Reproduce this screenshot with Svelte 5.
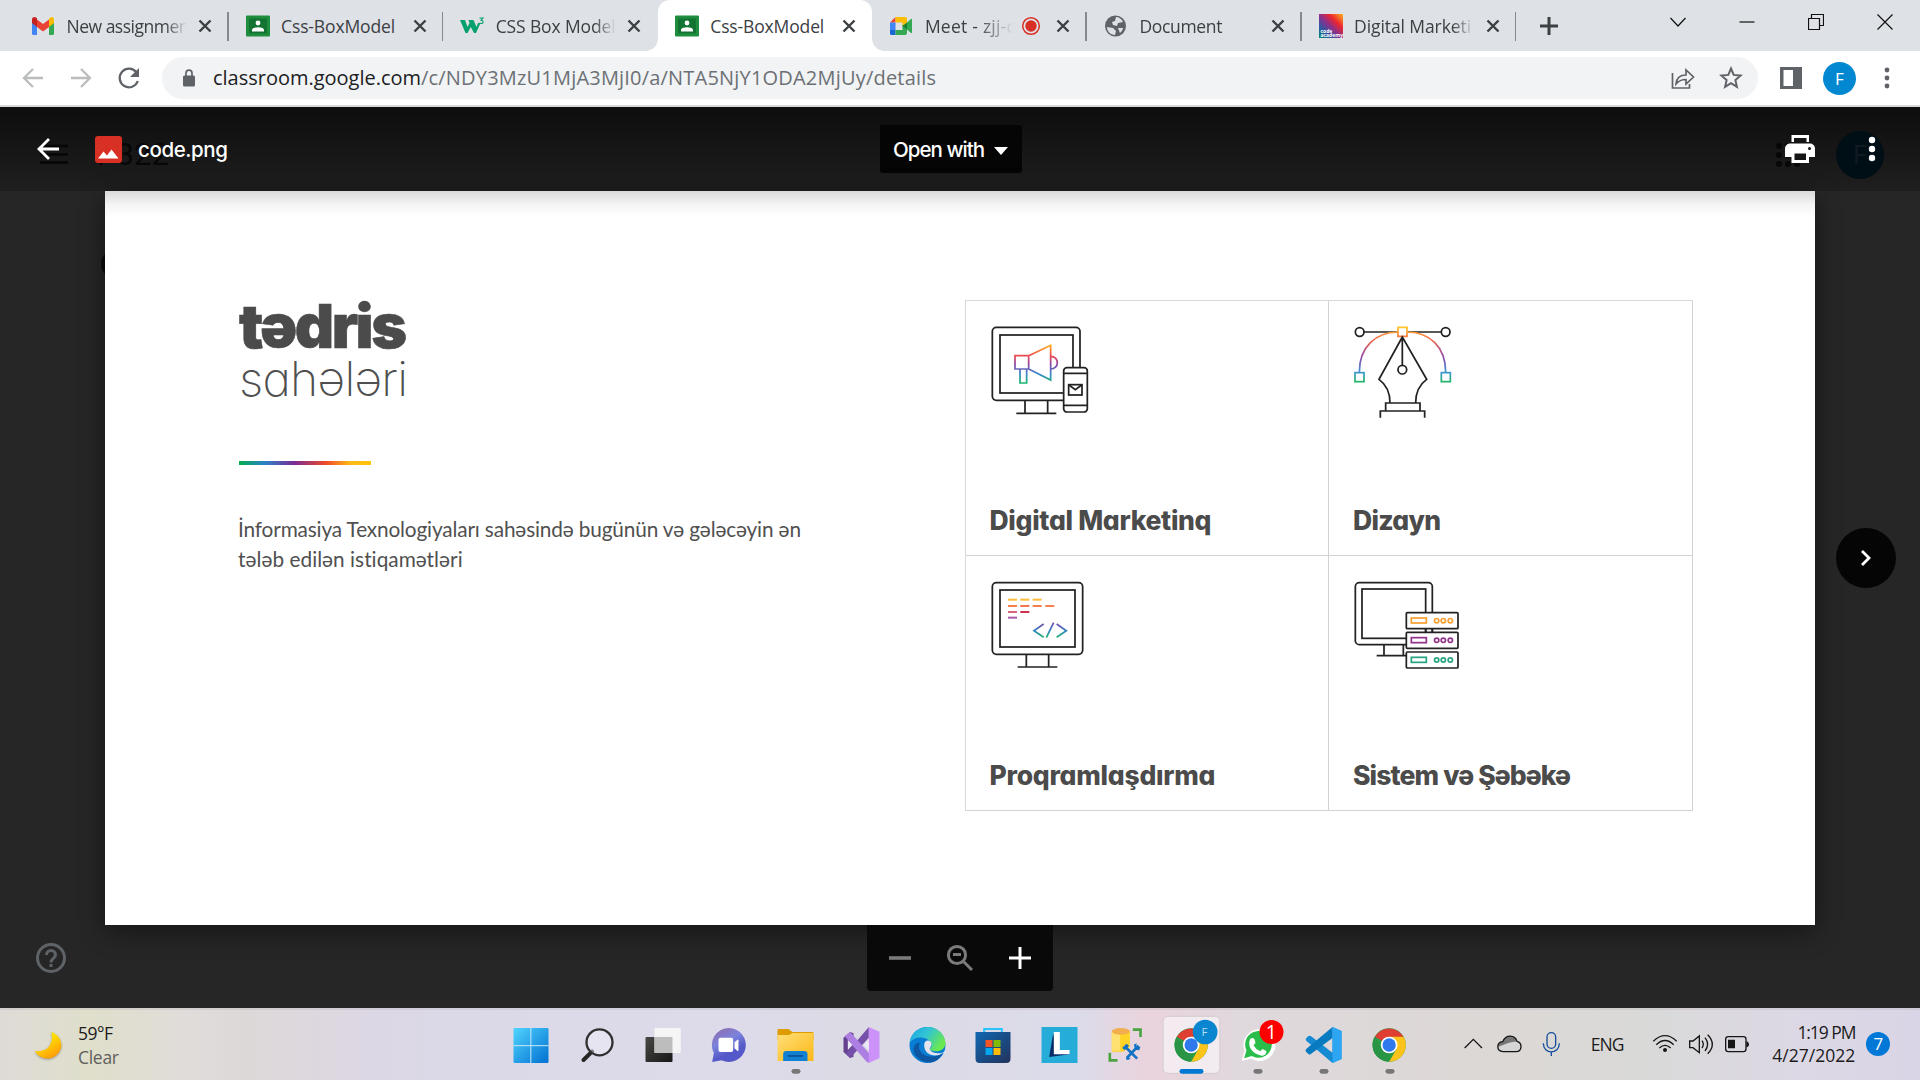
<script>
  // Spreads letter-spacing so that a label takes the given width.
  function fit(node, width) {
    const current = node.getBoundingClientRect().width;
    const count = Math.max(node.textContent.length - 1, 1);
    if (width) node.style.letterSpacing = `${(width - current) / count}px`;
  }

  const tabs = [
    { icon: 'gmail', title: 'New assignmen', width: 123 },
    { icon: 'classroom', title: 'Css-BoxModel', width: 114 },
    { icon: 'w3', title: 'CSS Box Model', width: 120, noline: true },
    { icon: 'classroom', title: 'Css-BoxModel', width: 114, active: true },
    { icon: 'meet', title: 'Meet - zjj-c', width: 90, recording: true },
    { icon: 'globe', title: 'Document', width: 83 },
    { icon: 'academy', title: 'Digital Marketi', width: 117 }
  ];

  const cards = [
    { art: 'marketing', label: 'Digital Marketinq', width: 222 },
    { art: 'design', label: 'Dizayn', width: 88 },
    { art: 'code', label: 'Proqramlaşdırma', width: 226 },
    { art: 'network', label: 'Sistem və Şəbəkə', width: 218 }
  ];

  const dashes = [
    [174, 164, '#fdbd3a'], [211, 164, '#fdbd3a'], [248, 164, '#fdbd3a'],
    [174, 183, '#f5804f'], [211, 183, '#f5764a'], [248, 183, '#f5804f'], [286, 183, '#f5804f'],
    [174, 201, '#d9647c'], [211, 201, '#cc3350'], [174, 218, '#a95aa9']
  ];
  const servers = [[203, '#f9a234'], [262, '#93358d'], [321, '#2aa584']];

  const apps = ['start', 'search', 'tasks', 'teams', 'files', 'vs', 'edge', 'store', 'l', 'sql', 'chromef', 'whatsapp', 'vscode', 'chrome'];
  const slotX = (i) => (i < 7 ? 55.5 + 198 * i : 61.5 + 198 * (i - 7));
</script>

{#snippet chrome(cx, cy)}
  <g transform="translate({cx} {cy})">
    <circle r="50" fill="#2a9c48" />
    <path d="M0 0 -43 -25A50 50 0 0 1 43 -25L22 -22Z" fill="#df3e32" />
    <path d="M0 -25H43.3A50 50 0 0 1 0 50L22 12Z" fill="#fcc31b" />
    <path d="M-43.3 -25-22 12 0 25-3 50A50 50 0 0 1 -43.3 -25Z" fill="#289444" />
    <circle r="25" fill="#fff" /><circle r="20" fill="#2f79ed" />
  </g>
{/snippet}

<div class="desktop">
  <header class="strip">
    {#each tabs as tab}
      <div class="tab" class:active={tab.active}>
        <svg class="fav" viewBox="0 0 24 24">
          {#if tab.icon === 'gmail'}
            <path d="M1 6v13.5q0 1.5 1.5 1.5H6V10z" fill="#4285f4" /><path d="M18 10v11h3.500q1.500 0 1.500-1.500V6z" fill="#34a853" />
            <path d="M6 5.500 12 10l6-4.500V13l-6 4.500L6 13z" fill="#ea4335" />
            <path d="M1 8V5.500c0-2.600 2.700-3 4-2l1 .8V13L1 9z" fill="#c5221f" /><path d="M18 4.500 19.500 3.500C21 2.500 23 3.500 23 5.500V9l-5 4z" fill="#fbbc04" />
          {:else if tab.icon === 'classroom'}
            <rect y="1.500" width="24" height="21" rx="1" fill="#1e8e3e" /><rect x="3" y="4.500" width="18" height="15" fill="#137333" />
            <circle cx="12" cy="9" r="2.400" fill="#fff" /><path d="M6 17.500v-2c1-3 11-3 12 0v2z" fill="#fff" />
          {:else if tab.icon === 'w3'}
            <path d="M0 6h5l2.500 7L9.500 9 8.500 6h5l3 7 1.500-4h2.500L16 19h-2l-3.200-6L7.500 19h-2z" fill="#04a06d" />
            <path d="M19.500 4h3.500l-2 2.300c3 0 2.700 3.700-.3 3.200l-1.200-.6" fill="none" stroke="#04a06d" stroke-width="1.100" />
          {:else if tab.icon === 'meet'}
            <path d="M1 8.500 6.500 3v5.500z" fill="#ea4335" /><path d="M6.500 3H16q2 0 2 2v6l-4.500 2.500v-5h-7z" fill="#fbbc04" />
            <path d="M1 8.500h5.500V16H1z" fill="#4285f4" /><path d="M1 16h5.500v5H2.500Q1 21 1 19.500z" fill="#1967d2" />
            <path d="M6.500 16h7v-5.500L18 14v5q0 2-2 2H6.500z" fill="#34a853" /><path d="m18 8.500 4-3.500q1-.5 1 .5v13q0 1-1 .5l-4-3.500z" fill="#34a853" /><path d="M13.500 12 18 8.500v7z" fill="#188038" />
          {:else if tab.icon === 'globe'}
            <circle cx="11.500" cy="12" r="10.500" fill="#5f6368" /><path d="M12 3c3 0 6 2 7 5l-5 1-1 3-4-1-1-3 3-1zM3 13l6 1 3 3-1 4c-5 0-8-4-8-8zM14 14h5c0 2-2 4-3 5z" fill="#dee1e6" />
          {:else}
            <defs><linearGradient id="ca" x1="0" y1="1" x2="1" y2="0"><stop offset="0" stop-color="#008a70" /><stop offset=".25" stop-color="#3156a3" /><stop offset=".48" stop-color="#8b308a" /><stop offset=".7" stop-color="#ed2530" /><stop offset="1" stop-color="#ffb51d" /></linearGradient></defs>
            <rect width="24" height="24" fill="url(#ca)" />
            <text x="1.500" y="18.500" class="mini">code</text><text x="1.500" y="22.500" class="mini">academy</text>
          {/if}
        </svg>
        <div class="title" class:short={tab.recording}><span use:fit={tab.width}>{tab.title}</span></div>
        {#if tab.recording}
          <svg class="rec" viewBox="0 0 20 20"><circle cx="10" cy="10" r="8.300" fill="none" stroke="#d93025" stroke-width="1.500" /><circle cx="10" cy="10" r="5.700" fill="#d93025" /></svg>
        {/if}
        <svg class="close" viewBox="0 0 16 16"><path d="M2.500 2.500l11 11m0-11-11 11" /></svg>
        {#if !tab.active && !tab.noline}<i class="rule"></i>{/if}
      </div>
    {/each}
    <svg class="plus" viewBox="0 0 20 20"><path d="M10 1v18M1 10h18" /></svg>
    <div class="controls">
      <svg viewBox="0 0 16 16"><path d="M.5 4 8 12l7.500-8" /></svg>
      <svg viewBox="0 0 16 16"><path d="M.5 8h15" /></svg>
      <svg viewBox="0 0 16 16"><path d="M.5 4.500h11v11H.5zM3.500 4.500v-4h12v11h-4" /></svg>
      <svg viewBox="0 0 16 16"><path d="m.5.5 15 15m0-15-15 15" /></svg>
    </div>
  </header>

  <div class="bar">
    <svg class="nav" viewBox="0 0 24 24"><path d="M22 12H3m9-9-9 9 9 9" /></svg>
    <svg class="nav" viewBox="0 0 24 24"><path d="M2 12h19m-9-9 9 9-9 9" /></svg>
    <svg class="nav reload" viewBox="0 0 24 24"><path d="M19.500 6.500A9.300 9.300 0 1 0 20.800 15" /><path class="solid" d="M22 2v9h-9z" /></svg>
    <div class="omni">
      <svg class="lock" viewBox="0 0 14 18"><rect x="1" y="6.500" width="12" height="11" rx="1.500" fill="#5f6368" /><path d="M4 7V4.200a3 3 0 0 1 6 0V7" fill="none" stroke="#5f6368" stroke-width="1.700" /></svg>
      <div class="url"><span use:fit={208}>classroom.google.com</span><span class="path" use:fit={515}>/c/NDY3MzU1MjA3MjI0/a/NTA5NjY1ODA2MjUy/details</span></div>
      <svg class="omniicon" viewBox="0 0 24 24"><path d="M1.500 7v15h17v-4M5 18c.5-6 4-9 10-9V4l7.500 7-7.500 7v-4.500c-5 0-7 1-10 4.500z" /></svg>
      <svg class="omniicon star" viewBox="0 0 24 24"><path d="m12 2.500 2.700 6.400 6.900.6-5.200 4.600 1.500 6.700-5.900-3.600-5.900 3.600 1.500-6.700-5.200-4.600 6.900-.6z" /></svg>
    </div>
    <svg class="panel" viewBox="0 0 22 22"><path d="M0 0h22v22H0zM3.500 3v16h9.500V3z" fill="#5f6368" fill-rule="evenodd" /></svg>
    <div class="avatar">F</div>
    <svg class="more" viewBox="0 0 6 22"><circle cx="3" cy="3" r="2.400" /><circle cx="3" cy="11" r="2.400" /><circle cx="3" cy="19" r="2.400" /></svg>
  </div>

  <main class="viewer">
    <div class="top">
      <svg class="ghostmenu" viewBox="0 0 28 20"><path d="M0 2h28M0 10.500h28M0 18.500h28" /></svg>
      <div class="ghostname">P322</div>
      <div class="ghostavatar">F</div>
      <svg class="ghostgrid" viewBox="0 0 26 26">
        {#each [4, 13, 22] as y}{#each [4, 13, 22] as x}<circle cx={x} cy={y} r="3" />{/each}{/each}
      </svg>
      <svg class="back" viewBox="0 0 24 24"><path d="M23 12H3m10-10L3 12l10 10" /></svg>
      <svg class="pic" viewBox="0 0 27 27"><rect width="27" height="27" rx="3" fill="#d93025" /><path d="M3 22.500 8.500 15.500 12 19.500 16.500 13.500 23.500 22.500Z" fill="#fff" /></svg>
      <div class="fname"><span use:fit={90}>code.png</span></div>
      <button class="open"><span use:fit={92}>Open with</span><svg viewBox="0 0 14 8"><path d="M0 0h14L7 8z" fill="#fff" /></svg></button>
      <svg class="print" viewBox="0 0 30 28"><path d="M6.500 0h17.500v7H6.500zM5 8.500h20a5 5 0 0 1 5 5V22h-6v6H6.500v-6H0v-8.500a5 5 0 0 1 5-5z" fill="#fff" /><path d="M9 3h12.500v4H9zM9.500 18.500h11.500V25H9.500z" fill="#151515" /><circle cx="24.500" cy="13.500" r="1.500" fill="#151515" /></svg>
      <svg class="dots" viewBox="0 0 8 26"><circle cx="4" cy="4" r="3.200" /><circle cx="4" cy="13" r="3.200" /><circle cx="4" cy="22" r="3.200" /></svg>
    </div>

    <div class="stage">
      <div class="peek"></div>
      <article class="sheet">
        <section class="intro">
          <h1><b><span use:fit={168}>tədris</span></b><em><span use:fit={169}>sahələri</span></em></h1>
          <div class="rainbow"></div>
          <p><span use:fit={563}>İnformasiya Texnologiyaları sahəsində bugünün və gələcəyin ən</span><br /><span use:fit={225}>tələb edilən istiqamətləri</span></p>
        </section>
        <section class="cards">
          {#each cards as card}
            <div class="card">
              {#if card.art === 'marketing'}
                <svg class="art" viewBox="120 102 320 282">
                  <defs><linearGradient id="mk" gradientUnits="userSpaceOnUse" x1="0" y1="165" x2="0" y2="280"><stop offset="0" stop-color="#ffb019" /><stop offset=".27" stop-color="#ef4b4b" /><stop offset=".5" stop-color="#9245a5" /><stop offset=".75" stop-color="#3987cc" /><stop offset="1" stop-color="#18b86b" /></linearGradient></defs>
                  <rect x="127" y="112" width="263" height="219" rx="12" /><rect x="150" y="135" width="219" height="174" />
                  <path d="M225 332v37m68-37v37M199 370h120" />
                  <g stroke="url(#mk)"><path d="M195 197h41v40h-41zM236 197 302 166V270L236 237M210 238v41h20v-41M303 199a19 19 0 0 1 0 38" /></g>
                  <rect x="341" y="233" width="71" height="133" rx="10" fill="#fff" /><path d="M341 250h71M341 346h71" /><rect x="356" y="284" width="40" height="31" /><path d="m357 285 19 14 19-14" />
                </svg>
              {:else if card.art === 'design'}
                <svg class="art" viewBox="101 102 320 282">
                  <defs><linearGradient id="ds" gradientUnits="userSpaceOnUse" x1="0" y1="112" x2="0" y2="275"><stop offset="0" stop-color="#ffc629" /><stop offset=".2" stop-color="#f66a42" /><stop offset=".55" stop-color="#914aae" /><stop offset=".83" stop-color="#3d98cf" /><stop offset="1" stop-color="#22b669" /></linearGradient></defs>
                  <path d="M134 126h101M265 126h101" /><circle cx="121" cy="126" r="13" /><circle cx="379" cy="126" r="13" />
                  <g stroke="url(#ds)"><path d="M120 246C120 170 170 127 235 126M379 246C379 170 330 127 265 126" /><rect x="236" y="112" width="27" height="27" /><rect x="107" y="248" width="27" height="27" /><rect x="366" y="248" width="27" height="27" /></g>
                  <path d="M249 141 179 268C204 286 212 311 212 339H289C289 311 297 286 322 268ZM249 142V225M199 339h103v24H199zM183 383v-20h133v20" /><circle cx="249" cy="239" r="13" />
                </svg>
              {:else if card.art === 'code'}
                <svg class="art" viewBox="120 102 320 282">
                  <defs><linearGradient id="cd" gradientUnits="userSpaceOnUse" x1="0" y1="233" x2="0" y2="278"><stop offset="0" stop-color="#8045a8" /><stop offset=".5" stop-color="#3280c5" /><stop offset="1" stop-color="#20b470" /></linearGradient></defs>
                  <rect x="127" y="113" width="271" height="215" rx="12" /><rect x="150" y="135" width="225" height="171" />
                  <path d="M229 329v36m67-36v36M203 366h119" />
                  {#each dashes as [x, y, c]}<rect {x} y={y - 3} width="27" height="6" fill={c} class="flat" />{/each}
                  <path stroke="url(#cd)" d="m281 237-29 20 29 20M311 233l-22 45M320 237l29 20-29 20" />
                </svg>
              {:else}
                <svg class="art" viewBox="101 102 320 282">
                  <rect x="108" y="113" width="231" height="186" rx="12" /><rect x="128" y="132" width="191" height="148" />
                  <path d="M194 300v32m58-32v32M172 332h90" />
                  {#each servers as [y, c]}
                    <rect x="261" {y} width="155" height="48" rx="3" fill="#fff" />
                    <g stroke={c}><rect x="276" y={y + 16} width="45" height="15" /><circle cx="352" cy={y + 24} r="6.500" /><circle cx="372" cy={y + 24} r="6.500" /><circle cx="393" cy={y + 24} r="6.500" /></g>
                  {/each}
                  <path d="M319 251v11m20-11v11" />
                </svg>
              {/if}
              <h2><span use:fit={card.width}>{card.label}</span></h2>
            </div>
          {/each}
        </section>
      </article>
      <div class="next"><svg viewBox="0 0 14 20"><path d="m3 3 7 7-7 7" /></svg></div>
    </div>

    <div class="foot">
      <svg class="help" viewBox="0 0 30 30"><circle cx="15" cy="15" r="13.500" /><path d="M10.500 12c0-6 9-6 9 0 0 3.500-4.500 3.500-4.500 7.500M15 21v3" /></svg>
      <div class="zoom">
        <svg viewBox="0 0 28 28" class="dim"><path d="M3 14h22" stroke-width="3.600" /></svg>
        <svg viewBox="0 0 28 28" class="dim"><circle cx="11" cy="11" r="8.600" /><path d="m17 17 9 9M7 10.500h8" /></svg>
        <svg viewBox="0 0 28 28"><path d="M3 14h22M14 3v22" /></svg>
      </div>
    </div>
  </main>

  <footer class="taskbar">
    <div class="weather">
      <svg viewBox="0 0 30 30"><defs><linearGradient id="mn" x1="0" y1="0" x2=".6" y2="1"><stop offset=".4" stop-color="#ffe100" /><stop offset="1" stop-color="#ff9d0a" /></linearGradient></defs><path d="M18 1C29 5 32 18 23 25 16 31 5 29 1 20.500 13 23 21 14 18 1z" fill="url(#mn)" /></svg>
      <div><span use:fit={35}>59°F</span><br /><span class="soft" use:fit={41}>Clear</span></div>
    </div>

    <nav class="apps">
      <svg width="0" height="0" class="defs">
        <defs>
          <linearGradient id="wn" x1="0" y1="0" x2="1" y2="1"><stop stop-color="#50d4ff" /><stop offset="1" stop-color="#0070d0" /></linearGradient>
          <linearGradient id="tm" x1="0" y1="0" x2=".5" y2="1"><stop stop-color="#9468a4" /><stop offset=".45" stop-color="#7b83dc" /><stop offset=".8" stop-color="#5558c8" /></linearGradient>
          <linearGradient id="fo" x1="0" y1="0" x2="1" y2="1"><stop stop-color="#ffdf78" /><stop offset="1" stop-color="#fcb716" /></linearGradient>
          <linearGradient id="eg" x1="0" y1="0" x2="1" y2=".5"><stop stop-color="#1ba5e8" /><stop offset=".5" stop-color="#32c5d2" /><stop offset="1" stop-color="#6be94f" /></linearGradient>
          <linearGradient id="st" x1="0" y1="0" x2="1" y2="1"><stop stop-color="#0f68b2" /><stop offset="1" stop-color="#23325c" /></linearGradient>
          <linearGradient id="tv" x1="0" y1="0" x2="1" y2="1"><stop stop-color="#484846" /><stop offset="1" stop-color="#171717" /></linearGradient>
        </defs>
      </svg>
      {#each apps as app, i}
        <svg class="slot" viewBox="{slotX(i)} 324 198 216">
          {#if app === 'start'}
            <rect x="102" y="384" width="105" height="105" rx="4" fill="url(#wn)" /><path d="M154 384v105M102 437h105" stroke="#c8e9fb" stroke-width="3" />
          {:else if app === 'search'}
            <path d="m312 480 26-26" stroke="#252525" stroke-width="12" stroke-linecap="round" /><circle cx="360" cy="427" r="39" fill="#f0eef8" fill-opacity=".5" stroke="#303030" stroke-width="7" />
          {:else if app === 'tasks'}
            <rect x="498" y="411" width="81" height="75" rx="3" fill="url(#tv)" /><rect x="525" y="384" width="79" height="75" rx="3" fill="#f5f5f5" /><path d="M525 411h54v48h-54z" fill="#bdbdbd" />
          {:else if app === 'teams'}
            <path d="M748 384a51 51 0 1 1-22 97l-28 5 5-27A51 51 0 0 1 748 384z" fill="url(#tm)" /><rect x="717" y="413" width="44" height="43" rx="6" fill="#fff" /><path d="m765 427 9-8q3-1 3 2v30q0 3-3 2l-9-8z" fill="#fff" />
          {:else if app === 'files'}
            <path d="M894 390q0-3 3-3h30l12 9h60q3 0 3 3v20H894z" fill="#df9c00" /><path d="M894 405h34l12-6h62v84H894z" fill="url(#fo)" /><path d="M911 483v-20q0-10 10-10h53q10 0 10 10v20z" fill="#1180d2" /><path d="M927 468h41" stroke="#084b8b" stroke-width="5" stroke-linecap="round" />
            <rect x="936" y="507" width="27" height="14" rx="7" fill="#777" />
          {:else if app === 'vs'}
            <path d="m1092 413 20-17 10 4v70l-10 4-20-18z" fill="#64408f" /><path d="m1168 381-69 80 13 13 56-61z" fill="#7550a9" /><path d="m1095 408 17-12 57 64v29l-8-4z" fill="#ae7fe2" /><path d="m1168 381 32 14v79l-32 15z" fill="#cc92fa" /><path d="m1105 420 14 15-14 15zM1168 419v32l-15-16z" fill="#ece8f6" />
          {:else if app === 'edge'}
            <circle cx="1344" cy="435" r="54" fill="#087dd3" /><path d="M1290 430C1296 366 1390 364 1398 428c1 20-22 32-45 23-8-4 10-10 2-22-10-20-50-25-65 1z" fill="url(#eg)" /><path d="M1321 428c-14 33 32 56 69 31-19 35-50 33-72 17-24-18-18-48 3-48z" fill="#0d56a1" /><path d="M1334 435c0-18 22-17 22-3 0 11-8 12-4 18 8 11 32 14 47 3v7l-9-1c-20 15-56 8-56-24z" fill="#e4e3f0" />
          {:else if app === 'store'}
            <path d="M134 405v-18h53v18" fill="none" stroke="#28c3fc" stroke-width="6" /><path d="M108 396h105v80q0 13-13 13h-79q-13 0-13-13z" fill="url(#st)" /><path d="M138 420h21v21h-21z" fill="#f35325" /><path d="M162 420h21v21h-21z" fill="#81bc06" /><path d="M138 444h21v21h-21z" fill="#05a6f0" /><path d="M162 444h21v21h-21z" fill="#ffba08" />
          {:else if app === 'l'}
            <path d="M306 381h108v108H306z" fill="#26acd9" /><path d="m341 400-12 71 62-8-40-10z" fill="#062c68" /><path d="M343 396h26v50h21v17h-47z" transform="translate(28 0)" fill="none" /><path d="M343 396h18v54h29v13h-47z" fill="#fff" />
          {:else if app === 'sql'}
            <path d="M517 394h54v47l-20 14h-34z" fill="#ffd426" /><path d="M517 394h25v58h-25z" fill="#ffe171" /><ellipse cx="544" cy="394" rx="27" ry="10" fill="#f1ad4e" /><path d="M580 389h23v22M511 458v23h23" fill="none" stroke="#4ba342" stroke-width="8" /><path d="m562 474 35-37M558 441l35 35" stroke="#1372c4" stroke-width="8" /><path d="m548 443 13-12 8 6-14 14zM583 434l8-4v12l12-2-4 11-12-2zM559 478l5-10 9 8-8 4z" fill="#1372c4" />
          {:else if app === 'chromef'}
            <rect x="671" y="349" width="170" height="171" rx="14" fill="#f4eff2" fill-opacity=".85" stroke="#d5cccf" stroke-width="3" />
            {@render chrome(755, 435)}
            <circle cx="797" cy="396" r="37" fill="#0a86d0" /><text x="786" y="409" class="letter">F</text><rect x="720" y="507" width="72" height="14" rx="7" fill="#0078d4" />
          {:else if app === 'whatsapp'}
            <path d="m906 483 9-31a48 48 0 1 1 20 24z" fill="#fff" /><path d="m914 475 7-24a40 40 0 1 1 16 17z" fill="#2bbd4c" /><path d="M932 417c5-5 12-4 14 4l2 8-6 7q7 13 20 18l7-7 10 5c5 3-2 16-12 15-28-4-45-28-35-50z" fill="#fff" />
            <circle cx="996" cy="396" r="36" fill="#f00" /><text x="979" y="416" class="one">1</text><rect x="942" y="507" width="27" height="14" rx="7" fill="#777" />
          {:else if app === 'vscode'}
            <path d="m1179 381 27 12v84l-27 12-78-66q-5-5 0-10l6-5q4-2 8 1l64 49z" fill="#168bd4" /><path d="M1179 381v33l-65 48q-4 3-7 0l-7-6q-4-4 0-9z" fill="#087ac0" /><path d="m1179 381 27 12v84l-27 12z" fill="#2ca5f3" />
            <rect x="1140" y="507" width="27" height="14" rx="7" fill="#777" />
          {:else}
            {@render chrome(1349, 435)}<rect x="1338" y="507" width="27" height="14" rx="7" fill="#777" />
          {/if}
        </svg>
      {/each}
    </nav>

    <div class="tray">
      <svg class="icons" viewBox="125 324 310 216">
        <path d="m133 444 26-26 26 26" class="line" />
        <path d="M248 455c-21-1-20-28-1-30 10-23 37-21 43-1 17 4 16 31-3 31z" fill="#d5d5d5" /><path d="M234 440c0-12 8-15 13-15 10-23 37-21 43-1l-24 4z" fill="#777" /><path d="M248 455c-21-1-20-28-1-30 10-23 37-21 43-1 17 4 16 31-3 31z" class="line" />
        <g stroke="#174e9c" stroke-width="4" fill="none"><rect x="380" y="398" width="26" height="47" rx="13" /><path d="M369 430c0 34 48 34 48 0M393 456v12" /></g>
      </svg>
      <span class="eng" use:fit={36}>ENG</span>
      <svg class="status" viewBox="690 324 306 216">
        <g class="line"><path d="M700 424q35-34 70 0M709 434q26-25 52 0M718 444q17-16 34 0" /><path d="M809 423v20h10l19 15v-50l-19 15zM846 422q8 11 0 22M855 413q16 20 0 40M863 404q28 29 0 57" /><rect x="917" y="410" width="61" height="45" rx="8" /></g>
        <circle cx="735" cy="450" r="6" fill="#161616" /><path d="M924 419h21v26h-21zM979 423q8 2 8 10t-8 9z" fill="#161616" />
      </svg>
      <div class="clock"><span use:fit={59}>1:19 PM</span><br /><span use:fit={83}>4/27/2022</span></div>
      <div class="count">7</div>
    </div>
  </footer>
</div>

<style>
  :global(body) { margin: 0; overflow: hidden; }
  .desktop { width: 1920px; height: 1080px; display: flex; flex-direction: column; font-family: "Open Sans", "Noto Sans", sans-serif; overflow: hidden; }
  svg { display: block; flex: none; }
  span { display: inline-block; white-space: nowrap; }

  .strip { height: 51px; flex: none; display: flex; background: #dee1e6; padding-left: 14px; }
  .tab { width: 214.600px; box-sizing: border-box; padding-left: 17px; display: flex; align-items: center; position: relative; flex: none; }
  .tab.active { background: #fff; border-radius: 12px 12px 0 0; }
  .tab.active::before, .tab.active::after { content: ""; position: absolute; bottom: 0; width: 12px; height: 12px; }
  .tab.active::before { left: -12px; background: radial-gradient(circle at 0 0, transparent 11.500px, #fff 12px); }
  .tab.active::after { right: -12px; background: radial-gradient(circle at 100% 0, transparent 11.500px, #fff 12px); }
  .fav { width: 24px; height: 24px; margin-right: 11.500px; }
  .mini { font: 700 5px "Open Sans", sans-serif; fill: #fff; }
  .title { width: 120px; overflow: hidden; font-size: 17.500px; line-height: 26px; color: #3c4043; -webkit-mask-image: linear-gradient(90deg, #000 82%, transparent); mask-image: linear-gradient(90deg, #000 82%, transparent); }
  .active .title, .tab:nth-child(2) .title { -webkit-mask-image: none; mask-image: none; }
  .title.short { width: 88px; -webkit-mask-image: linear-gradient(90deg, #000 60%, transparent); mask-image: linear-gradient(90deg, #000 60%, transparent); }
  .rec { width: 20px; height: 20px; margin: 0 0 0 8px; }
  .close { width: 16px; height: 16px; margin-left: auto; margin-right: 15.500px; fill: none; stroke: #3c4043; stroke-width: 2.400; }
  .rule { position: absolute; right: 0; top: 12px; height: 29px; width: 1.500px; background: #868a8f; }
  .plus { width: 20px; height: 20px; margin: 16px 0 0 23px; stroke: #3c4043; stroke-width: 3; }
  .controls { display: flex; gap: 53px; margin: 14px 27px 0 auto; }
  .controls svg { width: 16px; height: 16px; fill: none; stroke: #111; stroke-width: 1.200; }

  .bar { height: 54px; border-bottom: 2px solid #d9d9d9; flex: none; display: flex; align-items: center; background: #fff; padding-left: 21px; }
  .nav { width: 24px; height: 24px; margin-right: 24px; fill: none; stroke: #babcbe; stroke-width: 2.300; }
  .reload { stroke: #5f6368; margin-right: 21px; }
  .solid { fill: #5f6368; stroke: none; }
  .omni { width: 1596px; height: 42px; border-radius: 21px; background: #f1f3f4; display: flex; align-items: center; box-sizing: border-box; padding: 0 15px 0 20px; }
  .lock { width: 14px; height: 20px; margin-right: 17px; }
  .url { font-size: 20px; line-height: 30px; color: #202124; flex: 1; display: flex; }
  .path { color: #6c7074; }
  .omniicon { width: 24px; height: 24px; fill: none; stroke: #5f6368; stroke-width: 1.700; margin-right: 24px; }
  .star { margin-right: 0; stroke-width: 2; }
  .panel { width: 22px; height: 22px; margin-left: 22px; }
  .avatar { width: 33px; height: 33px; border-radius: 50%; background: #0288d1; color: #fff; margin-left: 21px; font-size: 17px; line-height: 33px; text-align: center; }
  .more { width: 6px; height: 22px; margin-left: 28px; fill: #5f6368; }

  .viewer { height: 901px; flex: none; background: #262626; display: flex; flex-direction: column; position: relative; }
  .top { height: 84px; background: linear-gradient(#0d0d0d, #1f1f1f); display: flex; align-items: center; position: relative; box-sizing: border-box; padding-left: 36px; color: #fff; font: 500 20.500px Inter, Roboto, sans-serif; }
  .ghostmenu { position: absolute; left: 40px; top: 37px; width: 28px; height: 20px; stroke: #060606; stroke-width: 2.500; }
  .ghostname { position: absolute; left: 97px; top: 29px; font: 400 31px/38px Roboto, sans-serif; color: #070707; }
  .ghostavatar { position: absolute; left: 1836px; top: 24px; width: 48px; height: 48px; border-radius: 50%; background: #000e16; color: #101a20; font: 26px/48px Roboto, sans-serif; text-indent: 17px; }
  .ghostgrid { position: absolute; left: 1775px; top: 35px; width: 26px; height: 26px; fill: #070707; }
  .back, .pic, .fname, .open, .print, .dots { position: relative; }
  .back { width: 24px; height: 24px; fill: none; stroke: #fff; stroke-width: 2.800; }
  .pic { width: 27px; height: 27px; margin-left: 35px; }
  .fname { width: 742px; margin-left: 16px; }
  .open { width: 142px; height: 48px; border: 0; border-radius: 3px; background: #050505; color: #fff; font: inherit; display: flex; align-items: center; padding: 0 0 0 13px; }
  .open svg { width: 14px; height: 8px; margin: 4px 0 0 10px; }
  .open span { flex: none; }
  .print { width: 30px; height: 28px; margin-left: 763px; }
  .dots { width: 8px; height: 26px; fill: #fff; margin-left: 53px; }

  .stage { height: 734px; display: flex; align-items: center; padding-left: 105px; position: relative; }
  .peek { position: absolute; left: 101px; top: 58px; width: 30px; height: 30px; border-radius: 50%; background: #0b0b0b; }
  .sheet { width: 1710px; height: 734px; flex: none; background: linear-gradient(#d9d9d9, #f5f5f5 14px, #fff 26px); display: flex; box-shadow: 0 6px 24px rgba(0, 0, 0, .45); position: relative; }
  .intro { width: 860px; box-sizing: border-box; padding: 105px 0 0 134px; color: #4b4b4b; }
  h1 { margin: 0; font-family: Inter, sans-serif; font-feature-settings: "cv11"; font-weight: 400; }
  h1 b { display: block; font-weight: 900; font-size: 61px; line-height: 60px; height: 60px; color: #4b4b4b; -webkit-text-stroke: .6px #4b4b4b; }
  h1 em { display: block; font-style: normal; font-weight: 200; font-size: 48px; line-height: 45px; height: 45px; color: #4f4f4f; }
  .rainbow { width: 132px; height: 4px; margin-top: 59.500px; background: linear-gradient(90deg, #00ad50, #2d80c8 20%, #7b2b92 42%, #f04b28 66%, #ffb918 84%, #ffc20e); }
  p { margin: 49px 0 0 -1px; font: 400 20.800px/30.600px Lato, "Open Sans", sans-serif; color: #505050; }
  .cards { width: 728px; height: 511px; margin-top: 109px; margin-left: -.5px; box-sizing: border-box; display: grid; grid-template-columns: 363.500px 363.500px; grid-template-rows: 255px 255px; border: solid #d9d9d9; border-width: 1px 0 0 1px; }
  .card { box-sizing: border-box; border: solid #d2d2d2; border-width: 0 1px 1px 0; padding: 23px 0 0 24px; display: flex; flex-direction: column; justify-content: space-between; }
  .art { width: 106.670px; height: 94px; fill: none; stroke: #222; stroke-width: 5.200; }
  .flat { stroke: none; }
  h2 { margin: 0 0 15px; font: 800 26.500px/40px Inter, sans-serif; font-feature-settings: "cv11"; color: #4b4b4b; }
  .next { width: 60px; height: 60px; border-radius: 50%; background: #050505; position: absolute; left: 1836px; top: 337px; display: grid; place-items: center; }
  .next svg { width: 14px; height: 20px; fill: none; stroke: #fff; stroke-width: 2.800; }

  .foot { height: 83px; display: flex; padding-left: 36px; position: relative; }
  .help { width: 30px; height: 30px; margin-top: 18px; fill: none; stroke: #5f6368; stroke-width: 3; }
  .zoom { width: 186px; height: 66px; margin-left: 801px; background: #090909; border-radius: 0 0 4px 4px; display: flex; align-items: center; justify-content: space-between; box-sizing: border-box; padding: 0 19px; }
  .zoom svg { width: 28px; height: 28px; fill: none; stroke: #fff; stroke-width: 3; }
  .zoom .dim { stroke: #7b7b7b; }

  .taskbar { height: 72px; flex: none; position: relative; display: flex; align-items: center; color: #1b1b1b; font-size: 17.500px; background: linear-gradient(90deg, #dedbd7 0, #dfdfcb 90px, #e0dcda 190px, #ddd8d8 250px, #dcd7e4 370px, #dbd9e8 460px, #dddbea 720px, #dcdae4 850px, #dcdbe9 1080px, #ead3dc 1150px, #dfd8dc 1240px, #dcd8d5 1500px, #d9d9d8 1640px, #dcd8e4 1790px, #d9d5e6 1920px); box-shadow: inset 0 2px rgba(190, 180, 190, .35); }
  .weather { width: 464px; display: flex; align-items: center; padding: 2px 0 0 34px; line-height: 24px; }
  .weather svg { width: 29px; height: 29px; margin: 1px 15px 0 0; filter: drop-shadow(0 1px 1px #998); }
  .soft { color: #5f605c; }
  .apps { display: flex; flex: none; }
  .defs { position: absolute; }
  .slot { width: 66px; height: 72px; }
  .letter { font: 34px "Open Sans", sans-serif; fill: #b8def5; }
  .one { font: 58px "Open Sans", sans-serif; fill: #fff; }
  .tray { display: flex; align-items: center; padding-left: 39.500px; }
  .icons { width: 103.330px; height: 72px; }
  .line { fill: none; stroke: #161616; stroke-width: 4; }
  .eng { margin-left: 26px; width: 38px; }
  .status { width: 102px; height: 72px; margin-left: 21px; }
  .clock { width: 103.500px; text-align: right; line-height: 23px; }
  .count { width: 24px; height: 24px; border-radius: 50%; background: #0078d7; color: #fff; font-size: 17px; line-height: 24px; text-align: center; margin-left: 11px; }
</style>
